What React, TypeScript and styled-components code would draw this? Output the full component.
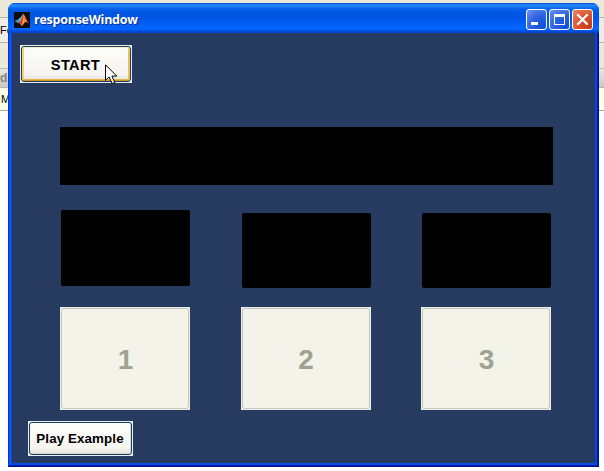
import React from "react";
import styled, { createGlobalStyle, css } from "styled-components";

const GlobalStyle = createGlobalStyle`
  * { box-sizing: border-box; }
  body { margin: 0; background: #fff; overflow: hidden; }
  button { font: inherit; padding: 0; margin: 0; border: 0; }
`;

const Desktop = styled.main`
  display: grid;
  width: 604px;
  height: 471px;
  overflow: hidden;
  font-family: "Liberation Sans", Arial, sans-serif;
  > * { grid-area: 1 / 1; }
`;

const Backdrop = styled.div`
  display: flex;
  flex-direction: column;
  background: #fff;
  color: #000;
  font-size: 11px;
`;

const Strip = styled.div<{ $height: number; $fill: string; $line: string }>`
  display: flex;
  align-items: center;
  flex: none;
  height: ${(p) => p.$height}px;
  background: ${(p) => p.$fill};
  border-bottom: 1px solid ${(p) => p.$line};
  white-space: nowrap;
`;

const HeaderText = styled.span`
  color: #85847d;
  font-size: 12px;
  font-weight: bold;
`;

const FieldText = styled.span`
  padding-left: 1px;
`;

const Window = styled.section`
  display: flex;
  flex-direction: column;
  margin: 3px 5px 4px 8px;
  border-radius: 7px 7px 0 0;
  background: #0831d9;
  overflow: hidden;
`;

const TitleBar = styled.header`
  display: flex;
  align-items: center;
  flex: none;
  height: 30px;
  padding: 3px 6px 0 6px;
  background: linear-gradient(
    #0747c8 0, #0c68ee 1px, #2c8cff 2px, #1677f5 4px, #0560e8 6px,
    #0055e3 10px, #0056e8 16px, #0361f8 22px, #0566ff 26px, #0050e0 28px, #003cc4 30px
  );
`;

const Title = styled.h1`
  flex: 1;
  margin: 0 0 0 4px;
  color: #fff;
  font: bold 12.5px/18px "Open Sans", "Noto Sans", sans-serif;
  letter-spacing: -0.25px;
  padding-top: 1px;
  text-shadow: 1px 1px 0 #0a318c;
`;

const Controls = styled.div`
  display: flex;
  gap: 2px;
`;

const ControlButton = styled.button<{ $danger?: boolean }>`
  display: grid;
  place-items: center;
  width: 21px;
  height: 21px;
  border: 1px solid #fff;
  border-radius: 3px;
  background: ${(p) =>
    p.$danger
      ? "radial-gradient(circle at 85% 85%, #c83a10, #dd5330 50%, #e98667)"
      : "radial-gradient(circle at 85% 90%, #1250d8, #2c62e0 50%, #6c94ef)"};
`;

const Frame = styled.div`
  display: flex;
  flex: 1;
  padding: 0 4px 4px;
  background: #0a42dc;
  box-shadow:
    inset 1px 0 #0a2fd0,
    inset -1px -1px #00108c,
    inset -2px -2px #001fb0,
    inset 3px 0 #0b58f4,
    inset 0 -4px #0a4ae6;
`;

const Client = styled.div`
  display: flex;
  flex: 1;
  flex-direction: column;
  align-items: flex-start;
  padding-top: 12px;
  background: #273a60;
`;

const buttonEdge = css`
  display: grid;
  place-items: center;
  border: 1px solid #e9eeea;
  background: #e9eeea;
`;

const PushButton = styled.button<{
  $width: number;
  $height: number;
  $left: number;
  $size: number;
  $tracking: number;
}>`
  ${buttonEdge}
  width: ${(p) => p.$width}px;
  height: ${(p) => p.$height}px;
  margin-left: ${(p) => p.$left}px;
  color: #000;
  font-size: ${(p) => p.$size}px;
  font-weight: bold;
  letter-spacing: ${(p) => p.$tracking}px;
  white-space: nowrap;
`;

const ButtonFace = styled.span<{ $hot?: boolean }>`
  display: flex;
  align-items: center;
  justify-content: center;
  width: 100%;
  height: 100%;
  padding-right: 1px;
  padding-top: ${(p) => (p.$hot ? 1 : 0)}px;
  border: 1px solid #173f62;
  border-radius: 3px;
  background: linear-gradient(#fdfdfb, #f5f4ef 80%, #e3e0d8);
  box-shadow: ${(p) =>
    p.$hot
      ? "inset 0 1px #fce9bd, inset 0 -1px #d69724, inset 2px 0 #f6cd80, inset -2px 0 #f2bd5b, inset 0 -2px #ebb449"
      : "inset -1px -1px #d9d6cc"};
`;

const MessageScreen = styled.div`
  width: 493px;
  height: 58px;
  margin: 44px 0 0 48px;
  background: #000;
`;

const Choices = styled.div`
  display: grid;
  grid-template-columns: 130px 130px 130px;
  column-gap: 50.5px;
  margin: 25px 0 0 48px;
`;

const Choice = styled.div`
  display: flex;
  flex-direction: column;
  justify-content: space-between;
  height: 200px;
`;

const Display = styled.div<{ $low: boolean }>`
  width: 129px;
  height: ${(p) => (p.$low ? 75 : 76)}px;
  margin: ${(p) => (p.$low ? 3 : 0)}px 0 0 1px;
  border-radius: 2px;
  background: #000;
`;

const ChoiceButton = styled.button`
  ${buttonEdge}
  height: 103px;
  color: #a1a192;
  font-size: 28px;
  font-weight: bold;
`;

const ChoiceFace = styled.span`
  display: flex;
  align-items: center;
  justify-content: center;
  width: 100%;
  height: 100%;
  padding: 2px 0 0 1px;
  border: 1px solid #c9c7ba;
  border-radius: 3px;
  background: #f4f3ea;
`;

const Spacer = styled.div<{ $height: number }>`
  height: ${(p) => p.$height}px;
`;

const Pointer = styled.svg`
  position: absolute;
  left: 105px;
  top: 64px;
  pointer-events: none;
`;

const MatlabIcon = () => (
  <svg width="16" height="16" viewBox="0 0 16 16" aria-hidden="true">
    <path d="M0 0h16v16H0z" fill="#0d0d10" />
    <path d="M0.6 9.2 4.9 6.8 7 9.2 4.2 11.2z" fill="#4596b8" />
    <path d="M4.9 6.8C7 6.4 7.4 3.6 9.2 1.8L8.2 8.2 6 10.6z" fill="#7cbfc8" />
    <path d="M9.2 1.8C8 5 7.5 9 4.2 11.2c1.5.1 2.2 1 3 2.8 2.2-.8 2.7-3.4 4-4.6z" fill="#c94420" />
    <path d="M9.2 1.6c2 2.1 3.2 7.2 5.9 10-2.3-1.6-3.7-2.3-5-.4-.8 1.2-1.7 2.5-2.9 2.8 1.5-3 2-7.2 2-12.4z" fill="#f57a30" />
    <path d="M9.5 3.4c.5 3-.1 6.2-1.6 9.1 1-.8 1.8-2.3 2.7-3.2z" fill="#ffc078" />
  </svg>
);

const MinimizeIcon = () => (
  <svg width="19" height="19" viewBox="0 0 19 19" shapeRendering="crispEdges" aria-hidden="true">
    <path d="M4 12h7v3H4z" fill="#fff" />
  </svg>
);

const MaximizeIcon = () => (
  <svg width="19" height="19" viewBox="0 0 19 19" shapeRendering="crispEdges" aria-hidden="true">
    <path fillRule="evenodd" d="M4 4h11v11H4zM5 7v7h9V7z" fill="#fff" />
  </svg>
);

const CloseIcon = () => (
  <svg width="19" height="19" viewBox="0 0 19 19" aria-hidden="true">
    <path d="m5 5 9 9m0-9-9 9" stroke="#fff" strokeWidth="2.2" strokeLinecap="square" />
  </svg>
);

export default function App() {
  return (
    <>
      <GlobalStyle />
      <Desktop>
        <Backdrop>
          <Strip $height={18} $fill="#ece9d8" $line="#b8b5a7" />
          <Strip $height={25} $fill="#efede4" $line="#b8b5a7">Fo</Strip>
          <Strip $height={26} $fill="#ece9d8" $line="#c0bdaf" />
          <Strip $height={19} $fill="linear-gradient(#e7e6e0, #c9c8c2)" $line="#b8b5a7">
            <HeaderText>d</HeaderText>
          </Strip>
          <Strip $height={23} $fill="#fffee9" $line="#aaa99f">
            <FieldText>M</FieldText>
          </Strip>
        </Backdrop>
        <Window>
          <TitleBar>
            <MatlabIcon />
            <Title>responseWindow</Title>
            <Controls>
              <ControlButton aria-label="Minimize"><MinimizeIcon /></ControlButton>
              <ControlButton aria-label="Maximize"><MaximizeIcon /></ControlButton>
              <ControlButton aria-label="Close" $danger><CloseIcon /></ControlButton>
            </Controls>
          </TitleBar>
          <Frame>
            <Client>
              <PushButton $width={112} $height={38} $left={8} $size={14.67} $tracking={0.3}>
                <ButtonFace $hot>START</ButtonFace>
              </PushButton>
              <MessageScreen />
              <Choices>
                {[1, 2, 3].map((n) => (
                  <Choice key={n}>
                    <Display $low={n > 1} />
                    <ChoiceButton disabled>
                      <ChoiceFace>{n}</ChoiceFace>
                    </ChoiceButton>
                  </Choice>
                ))}
              </Choices>
              <Spacer $height={11} />
              <PushButton $width={105} $height={35} $left={16} $size={13.33} $tracking={0.12}>
                <ButtonFace>Play Example</ButtonFace>
              </PushButton>
            </Client>
          </Frame>
        </Window>
        <Pointer width="13" height="21" viewBox="0 0 13 21" aria-hidden="true">
          <path d="M.5.8v15.5l3.6-3.4 3 6.7 2.7-1.2-2.9-6.3h4.9z" fill="#fff" stroke="#000" />
        </Pointer>
      </Desktop>
    </>
  );
}
